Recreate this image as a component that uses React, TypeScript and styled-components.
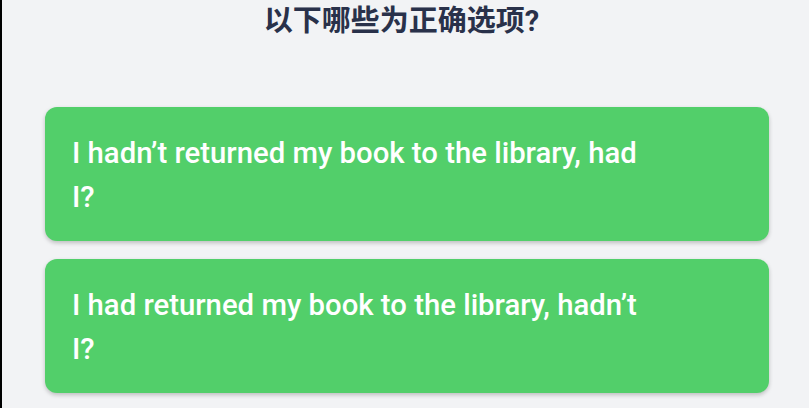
import React from "react";
import styled, { createGlobalStyle } from "styled-components";

const GlobalStyle = createGlobalStyle`
  html, body {
    margin: 0;
    padding: 0;
    background: #f2f3f5;
  }
  body {
    font-family: Roboto, "Noto Sans CJK SC", sans-serif;
  }
`;

const Page = styled.div`
  box-sizing: border-box;
  width: 809px;
  height: 408px;
  overflow: hidden;
  border-left: 2px solid #000;
  background: #f2f3f5;
  display: flex;
  flex-direction: column;
`;

const Title = styled.h1`
  margin: 0;
  padding: 4px 8px 0 0;
  height: 107px;
  box-sizing: border-box;
  text-align: center;
  font-family: Roboto, "Noto Sans CJK SC", sans-serif;
  font-size: 29px;
  line-height: 34px;
  font-weight: 700;
  color: #29314a;
`;

const List = styled.div`
  display: flex;
  flex-direction: column;
  gap: 18px;
  padding: 0 40px 0 43px;
`;

const Card = styled.div`
  box-sizing: border-box;
  height: 134px;
  background: #52cf6a;
  border-radius: 12px;
  box-shadow: 0 2px 4px rgba(0, 0, 0, 0.22);
  padding: 24px 27px;
`;

const CardText = styled.p`
  margin: 0;
  max-width: 585px;
  font-family: Roboto, sans-serif;
  font-weight: 500;
  font-size: 29.3px;
  line-height: 44px;
  color: #ffffff;
`;

const options = [
  "I hadn\u2019t returned my book to the library, had I?",
  "I had returned my book to the library, hadn\u2019t I?",
];

export default function App() {
  return (
    <>
      <GlobalStyle />
      <Page>
        <Title>以下哪些为正确选项?</Title>
        <List>
          {options.map((o) => (
            <Card key={o}>
              <CardText>{o}</CardText>
            </Card>
          ))}
        </List>
      </Page>
    </>
  );
}
